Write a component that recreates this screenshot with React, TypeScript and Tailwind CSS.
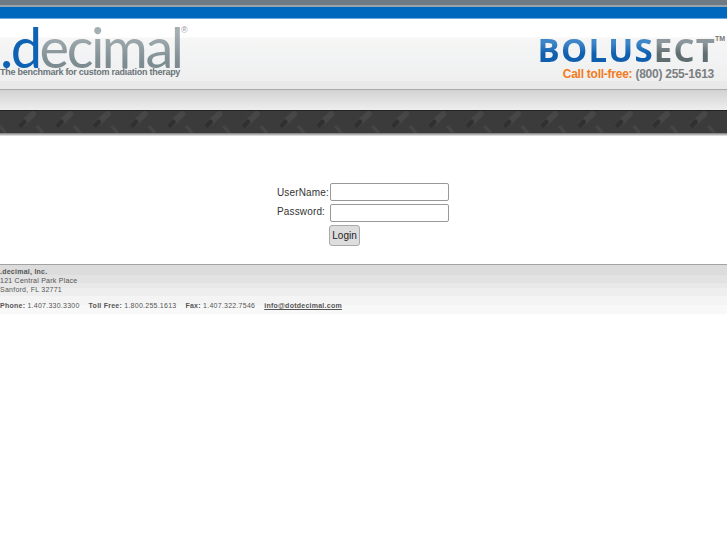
import React from 'react';

const sans = 'font-["Liberation_Sans",Arial,sans-serif]';

function CheckPattern() {
    return (
        <svg className="block w-full h-[22px]" xmlns="http://www.w3.org/2000/svg">
            <defs>
                <pattern id="plate" width="37.3" height="22" patternUnits="userSpaceOnUse">
                    <path d="M22 13 L33 3" stroke="#474747" strokeWidth="6" strokeLinecap="round" />
                    <path d="M21 14 L24 11" stroke="#303030" strokeWidth="5" strokeLinecap="round" />
                    <path d="M37 15 L43 22 M-0.3 15 L5.7 22" stroke="#464646" strokeWidth="3" />
                </pattern>
            </defs>
            <rect width="100%" height="22" fill="#3b3b3b" />
            <rect width="100%" height="22" fill="url(#plate)" />
        </svg>
    );
}

function Logo() {
    return (
        <div className="relative w-[190px] h-[62px]">
            <div className="font-['Lato','Open_Sans',sans-serif] font-normal text-[56px] leading-[40px] tracking-[-2.5px] whitespace-nowrap mt-[8px]">
                <span className="text-[#0f63b4]">.d</span>
                <span className="bg-[linear-gradient(#a3afb3_30%,#7d8c91_75%)] bg-clip-text text-transparent">ecimal</span>
            </div>
            <span className={`absolute left-[181px] top-[6px] text-[9px] leading-[10px] text-[#999] ${sans}`}>®</span>
            <div className={`absolute left-0 top-[48px] text-[9px] font-bold leading-[11px] tracking-[-0.26px] whitespace-nowrap text-[#6b7478] ${sans}`}>
                The benchmark for custom radiation therapy
            </div>
        </div>
    );
}

function Brand() {
    return (
        <div className="flex flex-col items-end pr-[11px] pt-[16px]">
            <div className="relative">
                <div className="font-['Open_Sans',sans-serif] font-bold text-[33px] leading-[30px] tracking-[1.2px] whitespace-nowrap">
                    <span className="bg-[linear-gradient(#3f86c8_35%,#0f5fae_60%)] bg-clip-text text-transparent">BOLUS</span>
                    <span className="bg-[linear-gradient(#8b979c_35%,#5f6c70_60%)] bg-clip-text text-transparent">ECT</span>
                </div>
                <span className={`absolute -right-[9px] top-0 text-[7px] leading-[8px] font-bold text-[#777] ${sans}`}>TM</span>
            </div>
            <div className={`mt-[2px] mr-[2px] text-[12px] font-bold leading-[15px] tracking-[-0.25px] whitespace-nowrap ${sans}`}>
                <span className="text-[#f47a20]">Call toll-free:</span>
                <span className="text-[#7a7f82]"> (800) 255-1613</span>
            </div>
        </div>
    );
}

export default function App() {
    return (
        <div className={`min-h-[545px] bg-white ${sans}`}>
            <div className="h-[5px] bg-[#6f7b82]" />
            <div className="h-[2px] bg-[#9aa4aa]" />
            <div className="h-[11px] bg-[#0068bd]" />
            <div className="h-[1px] bg-[#6fa8dc]" />

            <div className="h-[62px] bg-[linear-gradient(#ffffff_0,#ffffff_18px,#f7f6f5_19px,#f2f3f4_60%,#efefef_100%)] flex justify-between">
                <Logo />
                <Brand />
            </div>
            <div className="h-[8px] bg-[#e9e9e9]" />
            <div className="h-[1px] bg-[#aaaaaa]" />
            <div className="h-[20px] bg-[linear-gradient(#d2d2d2,#eeeeee)]" />

            <div className="h-[1px] bg-[#222]" />
            <CheckPattern />
            <div className="h-[3px] bg-[linear-gradient(#777,#eee)]" />

            <div className="flex justify-center pt-[47px] pr-[1px]">
                <div className="grid grid-cols-[51px_119px] gap-x-[2px] text-[10px] tracking-[0.15px] text-[#333]">
                    <label className="h-[17px] leading-[18px] whitespace-nowrap mt-[1px]">UserName:</label>
                    <input className="h-[18px] border border-[#999] rounded-[2px] bg-white" />
                    <label className="h-[18px] leading-[18px] whitespace-nowrap mt-[2px]">Password:</label>
                    <input className="h-[18px] mt-[3px] border border-[#999] rounded-[2px] bg-white" />
                    <div />
                    <button className="mt-[3px] -ml-[1px] w-[31px] h-[21px] border border-[#aaa] rounded-[3px] bg-[#dddddd] text-[10px] tracking-normal text-[#222]">Login</button>
                </div>
            </div>

            <div className="mt-[18px] border-t border-[#a3a3a3]">
                <div className="h-[49px] bg-[linear-gradient(#dcdcdc_0,#dcdcdc_10px,#e2e2e2_10px,#e2e2e2_18px,#e8e8e8_18px,#e8e8e8_23px,#eeeeee_23px,#eeeeee_31px,#f4f4f4_31px,#f4f4f4_40px,#f8f8f8_40px)] text-[7px] leading-[9px] tracking-[0.25px] text-[#555]">
                    <div className="pt-[2px]">
                        <div className="font-bold">.decimal, Inc.</div>
                        <div>121 Central Park Place</div>
                        <div>Sanford, FL 32771</div>
                    </div>
                    <div className="mt-[7px] flex gap-[9px] whitespace-nowrap">
                        <span><b>Phone:</b> 1.407.330.3300</span>
                        <span><b>Toll Free:</b> 1.800.255.1613</span>
                        <span><b>Fax:</b> 1.407.322.7546</span>
                        <a className="font-bold underline">info@dotdecimal.com</a>
                    </div>
                </div>
            </div>
        </div>
    );
}
